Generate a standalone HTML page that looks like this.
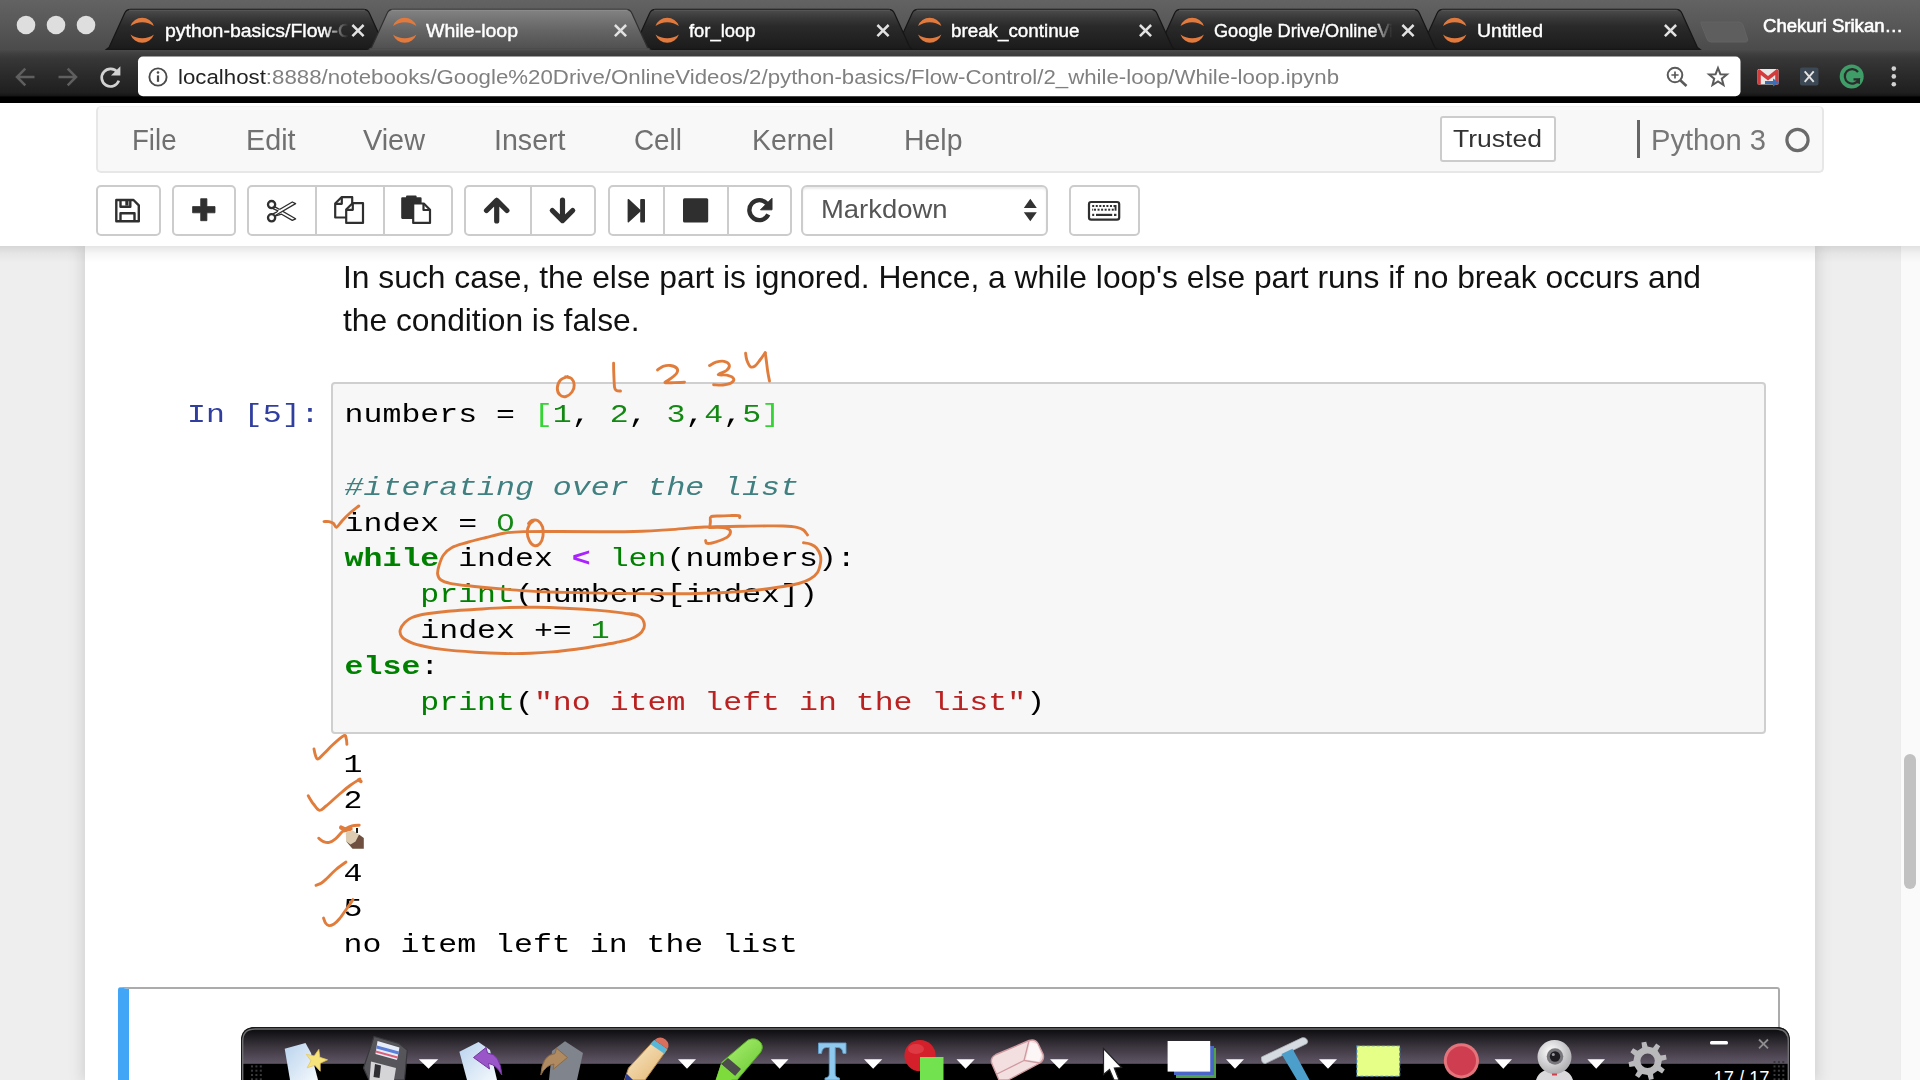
<!DOCTYPE html>
<html>
<head>
<meta charset="utf-8">
<title>While-loop</title>
<style>
*{box-sizing:border-box;margin:0;padding:0}
html,body{width:1920px;height:1080px;overflow:hidden;background:#fff;font-family:"Liberation Sans",sans-serif;}
.abs{position:absolute}
.t{position:absolute;white-space:nowrap;transform-origin:0 50%;}
.tabtxt{color:#fff;font-size:18px;line-height:24px;top:18px;-webkit-text-stroke:0.4px #fff;overflow:hidden}
#urltxt{left:178px;top:64px;font-size:20.5px;line-height:26px;color:#808080;}
#urltxt b{font-weight:normal;color:#222}
#header{position:absolute;left:0;top:103px;width:1920px;height:143px;background:#fff;}
#hshadow{position:absolute;left:0;top:246px;width:1920px;height:17px;background:linear-gradient(rgba(0,0,0,0.10),rgba(0,0,0,0.035) 45%,rgba(0,0,0,0));z-index:5}
#menubar{position:absolute;left:96px;top:106px;width:1728px;height:67px;background:#f8f8f8;border:2px solid #e7e7e7;border-top:1px solid #f0f0f0;border-radius:5px;}
.menu{top:123px;font-size:29px;line-height:34px;color:#707070;}
.btn{position:absolute;top:185px;height:51px;background:#fff;border:2px solid #ccc;border-radius:5px;}
.dv{position:absolute;top:187px;width:2px;height:47px;background:#ccc}
#site{position:absolute;left:0;top:246px;width:1920px;height:834px;background:#eeeeee;overflow:hidden}
#nbc{position:absolute;left:85px;top:0;width:1730px;height:834px;background:#fff;box-shadow:0 0 14px 2px rgba(87,87,87,0.2);}
#sbar{position:absolute;left:1900px;top:246px;width:20px;height:834px;background:#fafafa;border-left:1px solid #ececec}
#thumb{position:absolute;left:1904.3px;top:754px;width:12px;height:134.5px;border-radius:7px;background:#c1c1c1}
.md{left:343px;font-size:30.5px;line-height:43px;color:#111;}
#inbox{position:absolute;left:331px;top:382px;width:1435px;height:352px;background:#f7f7f7;border:2px solid #cfcfcf;border-radius:4px;}
pre{font-family:"Liberation Mono",monospace;font-size:31.55px;line-height:42.857px;color:#000;white-space:pre;transform:scaleY(0.84);transform-origin:0 0}
#prompt{position:absolute;left:187px;top:398.3px;color:#303f9f}
#code{position:absolute;left:344.6px;top:398.3px;}
#out{position:absolute;left:343.6px;top:748.3px;}
.k{color:#008000;font-weight:bold}.n{color:#138813}.c{color:#408080;font-style:italic}.o{color:#aa22ff;font-weight:bold}.b{color:#008000}.s{color:#ba2121}.br{color:#35d435}
#cell2{position:absolute;left:118px;top:987px;width:1662px;height:100px;background:#fff;border:2px solid #ababab;border-left:11px solid #42a5f5;border-radius:3px;}
#ink{position:absolute;left:0;top:0;z-index:20}
#dock{position:absolute;left:0;top:0;z-index:30}
</style>
</head>
<body>
<svg id="chrome" class="abs" style="left:0;top:0" width="1920" height="104" viewBox="0 0 1920 104">
<defs>
<linearGradient id="gF" x1="0" y1="0" x2="0" y2="1"><stop offset="0" stop-color="#636363"/><stop offset="1" stop-color="#4b4b4b"/></linearGradient>
<linearGradient id="gN" x1="0" y1="0" x2="0" y2="1"><stop offset="0" stop-color="#4d4d4d"/><stop offset="0.09" stop-color="#404040"/><stop offset="0.2" stop-color="#373737"/><stop offset="0.55" stop-color="#2a2a2a"/><stop offset="0.9" stop-color="#1f1f1f"/><stop offset="1" stop-color="#101010"/></linearGradient>
<linearGradient id="gI" x1="0" y1="0" x2="0" y2="1"><stop offset="0" stop-color="#4d4d4d"/><stop offset="0.22" stop-color="#383838"/><stop offset="0.42" stop-color="#2a2a2a"/><stop offset="1" stop-color="#1b1b1b"/></linearGradient>
<linearGradient id="gA" x1="0" y1="0" x2="0" y2="1"><stop offset="0" stop-color="#838383"/><stop offset="0.5" stop-color="#666666"/><stop offset="1" stop-color="#505050"/></linearGradient>
</defs>
<rect x="0" y="0" width="1920" height="50" fill="url(#gF)"/>
<rect x="0" y="49" width="1920" height="48.5" fill="url(#gN)"/>
<rect x="0" y="96.5" width="1920" height="7" fill="#000"/>
<rect x="0" y="103" width="1920" height="1" fill="#777" opacity="0.55"/>
<circle cx="26" cy="25" r="9.3" fill="#dedede"/>
<circle cx="56" cy="25" r="9.3" fill="#dedede"/>
<circle cx="86" cy="25" r="9.3" fill="#dedede"/>
<path d="M1419.0,49.3 L1421.5,47.5 L1437.0,13.5 Q1438.8,9.4 1443.0,9.4 L1676.0,9.4 Q1680.2,9.4 1682.0,13.5 L1697.5,47.5 L1700.0,49.3 Z" fill="url(#gI)" stroke="#161616" stroke-width="1.2"/>
<path d="M1441.5,10.2 L1677.5,10.2" stroke="#5a5a5a" stroke-width="1"/>
<path d="M1156.5,49.3 L1159.0,47.5 L1174.5,13.5 Q1176.3,9.4 1180.5,9.4 L1413.5,9.4 Q1417.7,9.4 1419.5,13.5 L1435.0,47.5 L1437.5,49.3 Z" fill="url(#gI)" stroke="#161616" stroke-width="1.2"/>
<path d="M1179.0,10.2 L1415.0,10.2" stroke="#5a5a5a" stroke-width="1"/>
<path d="M894.0,49.3 L896.5,47.5 L912.0,13.5 Q913.8,9.4 918.0,9.4 L1151.0,9.4 Q1155.2,9.4 1157.0,13.5 L1172.5,47.5 L1175.0,49.3 Z" fill="url(#gI)" stroke="#161616" stroke-width="1.2"/>
<path d="M916.5,10.2 L1152.5,10.2" stroke="#5a5a5a" stroke-width="1"/>
<path d="M631.5,49.3 L634.0,47.5 L649.5,13.5 Q651.3,9.4 655.5,9.4 L888.5,9.4 Q892.7,9.4 894.5,13.5 L910.0,47.5 L912.5,49.3 Z" fill="url(#gI)" stroke="#161616" stroke-width="1.2"/>
<path d="M654.0,10.2 L890.0,10.2" stroke="#5a5a5a" stroke-width="1"/>
<path d="M106.5,49.3 L109.0,47.5 L124.5,13.5 Q126.3,9.4 130.5,9.4 L363.5,9.4 Q367.7,9.4 369.5,13.5 L385.0,47.5 L387.5,49.3 Z" fill="url(#gI)" stroke="#161616" stroke-width="1.2"/>
<path d="M129.0,10.2 L365.0,10.2" stroke="#5a5a5a" stroke-width="1"/>
<path d="M369.0,49.3 L371.5,47.5 L387.0,13.5 Q388.8,9.4 393.0,9.4 L626.0,9.4 Q630.2,9.4 632.0,13.5 L647.5,47.5 L650.0,49.3 Z" fill="url(#gA)" stroke="#303030" stroke-width="1.2"/>
<path d="M391.5,10.2 L627.5,10.2" stroke="#909090" stroke-width="1"/>
<rect x="369.5" y="48.3" width="280" height="2" fill="#4f4f4f"/>
<path d="M130.5,26 A12.4,12.4 0 0 1 153.89999999999998,26 A20,20 0 0 0 130.5,26Z" fill="#e27a3d"/>
<path d="M130.5,34.4 A12.4,12.4 0 0 0 153.89999999999998,34.4 A20,20 0 0 1 130.5,34.4Z" fill="#e27a3d"/>
<path d="M352.4,25.0 L363.6,36.2 M363.6,25.0 L352.4,36.2" stroke="#e2e2e2" stroke-width="2.5" stroke-linecap="butt"/>
<path d="M393.0,26 A12.4,12.4 0 0 1 416.4,26 A20,20 0 0 0 393.0,26Z" fill="#e27a3d"/>
<path d="M393.0,34.4 A12.4,12.4 0 0 0 416.4,34.4 A20,20 0 0 1 393.0,34.4Z" fill="#e27a3d"/>
<path d="M614.9,25.0 L626.1,36.2 M626.1,25.0 L614.9,36.2" stroke="#e2e2e2" stroke-width="2.5" stroke-linecap="butt"/>
<path d="M655.5,26 A12.4,12.4 0 0 1 678.9000000000001,26 A20,20 0 0 0 655.5,26Z" fill="#e27a3d"/>
<path d="M655.5,34.4 A12.4,12.4 0 0 0 678.9000000000001,34.4 A20,20 0 0 1 655.5,34.4Z" fill="#e27a3d"/>
<path d="M877.4,25.0 L888.6,36.2 M888.6,25.0 L877.4,36.2" stroke="#e2e2e2" stroke-width="2.5" stroke-linecap="butt"/>
<path d="M918.0,26 A12.4,12.4 0 0 1 941.4000000000001,26 A20,20 0 0 0 918.0,26Z" fill="#e27a3d"/>
<path d="M918.0,34.4 A12.4,12.4 0 0 0 941.4000000000001,34.4 A20,20 0 0 1 918.0,34.4Z" fill="#e27a3d"/>
<path d="M1139.9,25.0 L1151.1,36.2 M1151.1,25.0 L1139.9,36.2" stroke="#e2e2e2" stroke-width="2.5" stroke-linecap="butt"/>
<path d="M1180.5,26 A12.4,12.4 0 0 1 1203.9,26 A20,20 0 0 0 1180.5,26Z" fill="#e27a3d"/>
<path d="M1180.5,34.4 A12.4,12.4 0 0 0 1203.9,34.4 A20,20 0 0 1 1180.5,34.4Z" fill="#e27a3d"/>
<path d="M1402.4,25.0 L1413.6,36.2 M1413.6,25.0 L1402.4,36.2" stroke="#e2e2e2" stroke-width="2.5" stroke-linecap="butt"/>
<path d="M1443.0,26 A12.4,12.4 0 0 1 1466.4,26 A20,20 0 0 0 1443.0,26Z" fill="#e27a3d"/>
<path d="M1443.0,34.4 A12.4,12.4 0 0 0 1466.4,34.4 A20,20 0 0 1 1443.0,34.4Z" fill="#e27a3d"/>
<path d="M1664.9,25.0 L1676.1,36.2 M1676.1,25.0 L1664.9,36.2" stroke="#e2e2e2" stroke-width="2.5" stroke-linecap="butt"/>
<path d="M1701,22 L1739,22 Q1742,22 1743,25 L1747.5,39 Q1748.5,42 1745,42 L1711,42 Q1708,42 1707,39 L1701.5,25 Q1700.5,22 1701,22Z" fill="#5e5e5e" stroke="#636363" stroke-width="1"/>
<rect x="138" y="56.6" width="1602.5" height="39.6" rx="5" fill="#fff"/>
<path d="M34.5,77 L17,77 M25.3,68.7 L17,77 L25.3,85.3" fill="none" stroke="#5f5f5f" stroke-width="2.5"/>
<path d="M58.5,77 L76,77 M67.7,68.7 L76,77 L67.7,85.3" fill="none" stroke="#5f5f5f" stroke-width="2.5"/>
<path d="M117.5,72.3 A8.8,8.8 0 1 0 118.8,80.6" fill="none" stroke="#d2d2d2" stroke-width="2.7"/>
<path d="M120.4,66.2 L120.4,75.6 L111,75.6 Z" fill="#d2d2d2"/>
<circle cx="158" cy="77" r="8.6" fill="none" stroke="#4a4a4a" stroke-width="1.9"/><rect x="156.9" y="75.4" width="2.2" height="6.4" fill="#4a4a4a"/><circle cx="158" cy="72.5" r="1.3" fill="#4a4a4a"/>
<circle cx="1675" cy="75" r="7.3" fill="none" stroke="#5a5a5a" stroke-width="2"/><path d="M1680.3,80.3 L1686.5,86" stroke="#5a5a5a" stroke-width="2.6"/><path d="M1671.4,75 h7.2 M1675,71.4 v7.2" stroke="#5a5a5a" stroke-width="1.7"/>
<polygon points="1718.0,68.0 1720.4,74.2 1726.9,74.5 1721.8,78.6 1723.5,85.0 1718.0,81.4 1712.5,85.0 1714.2,78.6 1709.1,74.5 1715.6,74.2" fill="none" stroke="#5a5a5a" stroke-width="2" stroke-linejoin="miter"/>
<rect x="1757.5" y="69" width="21" height="15.5" rx="1.5" fill="#e8e8e8"/><path d="M1757.5,70.5 L1757.5,84.5 L1760.8,84.5 L1760.8,75 L1768,80.5 L1775.2,75 L1775.2,84.5 L1778.5,84.5 L1778.5,70.5 L1776.8,69 L1768,76 L1759.2,69 Z" fill="#d23c3c"/><path d="M1765,81 h8 v-2.5 l6,4 l-6,4 v-2.5 h-8z" fill="#3a6fb7"/>
<rect x="1800" y="67.5" width="18.5" height="18" rx="2" fill="#3c4954"/><path d="M1804.7,71.3 L1813.7,81.8 M1813.7,71.3 L1804.7,81.8" stroke="#e4e4e4" stroke-width="1.9"/>
<circle cx="1851.7" cy="76.5" r="12" fill="#3f9d68"/><path d="M1858,72 A7.3,7.3 0 1 0 1858.8,79.3 L1853.5,79.3" fill="none" stroke="#2b2b2b" stroke-width="2.2"/><path d="M1855.5,82.8 L1860,78 L1860,84z" fill="#2b2b2b"/>
<circle cx="1893.8" cy="68.6" r="2.3" fill="#d2d2d2"/>
<circle cx="1893.8" cy="76.4" r="2.3" fill="#d2d2d2"/>
<circle cx="1893.8" cy="84.2" r="2.3" fill="#d2d2d2"/>
</svg>
<div class="abs" style="left:165px;top:18.8px;width:185px;height:24px;overflow:hidden;-webkit-mask-image:linear-gradient(90deg,#000 86%,transparent 99%)"><div class="t tabtxt" style="transform:scaleX(1.0808);left:0;top:0;overflow:visible">python-basics/Flow-<span style="position:absolute;left:100%">Control</span></div></div>
<div class="t tabtxt" style="transform:scaleX(1.0818);left:426px;top:18.8px">While-loop</div>
<div class="t tabtxt" style="transform:scaleX(1.0221);left:688.5px;top:18.8px">for_loop</div>
<div class="t tabtxt" style="transform:scaleX(1.0439);left:951px;top:18.8px">break_continue</div>
<div class="abs" style="left:1214px;top:18.8px;width:180px;height:24px;overflow:hidden;-webkit-mask-image:linear-gradient(90deg,#000 88%,transparent 99%)"><div class="t tabtxt" style="transform:scaleX(1.0087);left:0;top:0;overflow:visible">Google Drive/Online<span style="position:absolute;left:100%">Videos</span></div></div>
<div class="t tabtxt" style="transform:scaleX(1.0814);left:1476.5px;top:18.8px">Untitled</div>
<div class="t tabtxt" style="transform:scaleX(1.0291);left:1763px;top:13.8px;-webkit-text-stroke:0.6px #fff">Chekuri Srikan…</div>
<div class="t" id="urltxt" style="transform:scaleX(1.0854);"><b>localhost</b>:8888/notebooks/Google%20Drive/OnlineVideos/2/python-basics/Flow-Control/2_while-loop/While-loop.ipynb</div>

<div id="header"></div>
<div id="menubar"></div>
<div class="t menu" style="transform:scaleX(0.9522);left:131.5px">File</div>
<div class="t menu" style="transform:scaleX(0.9903);left:245.5px">Edit</div>
<div class="t menu" style="transform:scaleX(0.9945);left:362.5px">View</div>
<div class="t menu" style="transform:scaleX(0.9858);left:493.5px">Insert</div>
<div class="t menu" style="transform:scaleX(0.9606);left:633.5px">Cell</div>
<div class="t menu" style="transform:scaleX(0.9782);left:751.5px">Kernel</div>
<div class="t menu" style="transform:scaleX(0.9806);left:903.5px">Help</div>

<div id="site"><div id="nbc"></div></div>
<div id="hshadow"></div>
<div id="sbar"></div><div id="thumb"></div>

<div class="t md" style="transform:scaleX(1.0424);top:256px">In such case, the else part is ignored. Hence, a while loop's else part runs if no break occurs and</div>
<div class="t md" style="transform:scaleX(1.0409);top:299px">the condition is false.</div>

<div id="inbox"></div>
<pre id="prompt">In [5]:</pre>
<pre id="code">numbers = <span class="br">[</span><span class="n">1</span>, <span class="n">2</span>, <span class="n">3</span>,<span class="n">4</span>,<span class="n">5</span><span class="br">]</span>

<span class="c">#iterating over the list</span>
index = <span class="n">0</span>
<span class="k">while</span> index <span class="o">&lt;</span> <span class="b">len</span>(numbers):
    <span class="b">print</span>(numbers[index])
    index += <span class="n">1</span>
<span class="k">else</span>:
    <span class="b">print</span>(<span class="s">"no item left in the list"</span>)</pre>
<div class="abs" id="zdot" style="left:502.4px;top:520px;width:6px;height:5px;background:#f7f7f7"></div>
<div class="abs" style="left:355.5px;top:828px;width:2px;height:5px;background:#1a1a1a"></div>
<pre id="out">1
2

4
5
no item left in the list</pre>

<div id="cell2"></div>

<div class="btn" style="left:96px;width:64.5px"></div>
<div class="btn" style="left:172px;width:63.5px"></div>
<div class="btn" style="left:247px;width:205.5px"></div>
<div class="btn" style="left:464px;width:132px"></div>
<div class="btn" style="left:608px;width:183.5px"></div>
<div class="btn" style="left:1069px;width:71px"></div>
<div class="dv" style="left:314.5px"></div>
<div class="dv" style="left:382.5px"></div>
<div class="dv" style="left:529.5px"></div>
<div class="dv" style="left:662.5px"></div>
<div class="dv" style="left:727px"></div>
<div class="btn" style="left:800.5px;width:247.5px;border-radius:6px;box-shadow:inset 0 2px 2px rgba(0,0,0,0.075)"></div>
<div class="t" style="transform:scaleX(1.0547);left:820.5px;top:193px;font-size:26px;line-height:32px;color:#555">Markdown</div>
<div class="abs" style="left:1439.5px;top:116px;width:116px;height:45.5px;background:#fff;border:2px solid #ccc;border-radius:3px"></div>
<div class="t" style="transform:scaleX(1.0792);left:1453px;top:124.4px;font-size:24.6px;line-height:30px;color:#333">Trusted</div>
<div class="abs" style="left:1636.5px;top:120px;width:3px;height:38px;background:#666"></div>
<div class="t" style="transform:scaleX(1.0045);left:1651px;top:123.2px;font-size:29px;line-height:34px;color:#777">Python 3</div>
<svg class="abs" style="left:0;top:0" width="1920" height="260" viewBox="0 0 1920 260">
<circle cx="1797.5" cy="140" r="10.6" fill="none" stroke="#6a6a6a" stroke-width="3.2"/>
<g fill="none" stroke="#2f2f2f" stroke-width="2.4" stroke-linejoin="round"><path d="M116.3,200 L133.5,200 L138.8,205.3 L138.8,221.3 L116.3,221.3 Z"/><path d="M120.5,221 L120.5,213.3 L134.5,213.3 L134.5,221"/><path d="M120.5,200.3 L120.5,206.8 L130.3,206.8 L130.3,200.3"/></g><rect x="125.3" y="201" width="3.2" height="4.6" fill="#2f2f2f"/>
<path d="M200.7,198.7 h6.2 v7.9 h8.1 v6.2 h-8.1 v7.9 h-6.2 v-7.9 h-8.1 v-6.2 h8.1z" fill="#2f2f2f" stroke="#2f2f2f" stroke-width="0.8" stroke-linejoin="round"/>
<g fill="none" stroke="#2f2f2f" stroke-width="2.3"><circle cx="271.6" cy="204.6" r="3.6"/><circle cx="271.6" cy="217.8" r="3.6"/></g>
<path d="M274.6,206.6 L295.6,218.8 L292.3,220.4 L281.6,214.2 L274.9,216.2 L273.5,213.6 L278.6,211.2 L273.5,208.9Z" fill="#fff" stroke="#2f2f2f" stroke-width="1.3" stroke-linejoin="round"/>
<path d="M274.9,215.8 L295.6,203.6 L292.3,202 L279.5,209.5 " fill="#fff" stroke="#2f2f2f" stroke-width="1.3" stroke-linejoin="round"/>
<g fill="#fff" stroke="#2f2f2f" stroke-width="2.2" stroke-linejoin="round"><path d="M335.2,203.5 L341.5,197.2 L352.2,197.2 L352.2,217.5 L335.2,217.5Z"/><path d="M335.5,203.8 L341.8,203.8 L341.8,197.5" fill="none"/><path d="M346.2,209.5 L352.5,203.2 L363,203.2 L363,222.9 L346.2,222.9Z"/><path d="M346.5,209.8 L352.8,209.8 L352.8,203.5" fill="none"/></g>
<path d="M402.3,198.3 L420.5,198.3 L420.5,203 L413,203 L413,217.8 L402.3,217.8Z" fill="#2f2f2f" stroke="#2f2f2f" stroke-width="2.2" stroke-linejoin="round"/><rect x="406" y="195.6" width="10.6" height="3.6" rx="1" fill="#2f2f2f"/>
<g fill="#fff" stroke="#2f2f2f" stroke-width="2.2" stroke-linejoin="round"><path d="M413.2,203.5 L423.8,203.5 L430,209.7 L430,222.9 L413.2,222.9Z"/><path d="M423.5,203.8 L423.5,210 L429.7,210" fill="none"/></g>
<path d="M496.7,200.39999999999998 L486.5,210.5 M496.7,200.39999999999998 L506.9,210.5 M496.7,201.7 L496.7,220.89999999999998" fill="none" stroke="#2f2f2f" stroke-width="5.2" stroke-linecap="round" stroke-linejoin="round"/>
<path d="M562.5,220.60000000000002 L552.3,210.5 M562.5,220.60000000000002 L572.7,210.5 M562.5,219.3 L562.5,200.10000000000002" fill="none" stroke="#2f2f2f" stroke-width="5.2" stroke-linecap="round" stroke-linejoin="round"/>
<path d="M628.3,199.6 L640.3,210.7 L628.3,221.8Z" fill="#2f2f2f" stroke="#2f2f2f" stroke-width="1.4" stroke-linejoin="round"/><rect x="640.2" y="199" width="4.8" height="23.5" rx="1" fill="#2f2f2f"/>
<rect x="683" y="198.2" width="25.2" height="24.4" rx="1.5" fill="#2f2f2f"/>
<path d="M767,203.6 A10,10 0 1 0 768.3,214.6" fill="none" stroke="#2f2f2f" stroke-width="4.4"/><path d="M772,198.3 L772,209.8 L760.5,209.8 Z" fill="#2f2f2f" stroke="#2f2f2f" stroke-width="1" stroke-linejoin="round"/>
<path d="M1030.3,198.8 L1036.8,208 L1023.8,208Z M1030.3,221.3 L1036.8,212.2 L1023.8,212.2Z" fill="#333"/>
<rect x="1089" y="202" width="30.2" height="17.6" rx="2.2" fill="#fff" stroke="#2f2f2f" stroke-width="2.2"/>
<g fill="#2f2f2f"><rect x="1092.20" y="205" width="2" height="2" /><rect x="1095.75" y="205" width="2" height="2" /><rect x="1099.30" y="205" width="2" height="2" /><rect x="1102.85" y="205" width="2" height="2" /><rect x="1106.40" y="205" width="2" height="2" /><rect x="1109.95" y="205" width="2" height="2" /><rect x="1113.50" y="205" width="2" height="2" /><rect x="1094.00" y="208.7" width="2" height="2" /><rect x="1097.55" y="208.7" width="2" height="2" /><rect x="1101.10" y="208.7" width="2" height="2" /><rect x="1104.65" y="208.7" width="2" height="2" /><rect x="1108.20" y="208.7" width="2" height="2" /><rect x="1111.75" y="208.7" width="2" height="2" /><rect x="1092.2" y="208.7" width="1" height="2"/><rect x="1114.6" y="205" width="1.9" height="5.7"/><rect x="1092.2" y="213.8" width="2" height="2.2"/><rect x="1096" y="213.8" width="16.2" height="2.2"/><rect x="1114" y="213.8" width="2.4" height="2.2"/></g>
</svg>
<svg id="ink" width="1920" height="1080" viewBox="0 0 1920 1080">
<g fill="none" stroke="#e17d3c" stroke-width="2.9" stroke-linecap="round" stroke-linejoin="round">
<path d="M567.5,376.5 C566.3,377.1 562.2,378.1 560.5,380.0 C558.8,381.9 557.4,385.5 557.3,388.0 C557.2,390.5 558.5,393.6 560.0,395.0 C561.5,396.4 564.0,397.0 566.0,396.5 C568.0,396.0 570.6,393.9 572.0,392.0 C573.4,390.1 574.3,387.2 574.2,385.0 C574.1,382.8 573.0,379.9 571.5,378.5 C570.0,377.1 566.5,377.1 565.5,376.8"/>
<path d="M613.6,363.2 C613.6,365.3 613.7,371.9 613.9,376.0 C614.1,380.1 614.2,385.1 614.6,387.5 C615.0,389.9 615.5,389.9 616.5,390.5 C617.5,391.1 619.8,390.9 620.5,391.0"/>
<path d="M657.5,370.0 C658.4,369.4 660.8,367.1 663.0,366.3 C665.2,365.6 668.2,365.1 670.5,365.5 C672.8,365.9 676.0,367.2 677.0,368.5 C678.0,369.8 677.7,371.8 676.5,373.5 C675.3,375.2 671.9,377.5 670.0,379.0 C668.1,380.5 664.3,382.0 665.0,382.6 C665.7,383.2 670.8,382.7 674.0,382.6 C677.2,382.5 682.8,382.3 684.5,382.2"/>
<path d="M709.5,365.6 C710.6,365.0 713.6,362.9 716.0,362.2 C718.4,361.5 721.8,360.8 724.0,361.3 C726.2,361.8 728.9,363.5 729.3,365.0 C729.7,366.5 728.4,368.9 726.5,370.5 C724.6,372.1 718.1,373.8 718.2,374.6 C718.3,375.4 724.4,374.5 727.0,375.2 C729.6,375.9 732.9,377.3 733.6,378.6 C734.3,379.9 732.8,381.9 731.0,383.0 C729.2,384.1 725.9,384.7 723.0,385.0 C720.1,385.3 715.2,384.8 713.6,384.8"/>
<path d="M745.6,353.2 C745.8,354.3 746.0,357.8 746.8,360.0 C747.6,362.2 748.9,365.6 750.3,366.6 C751.7,367.6 753.4,367.1 755.0,366.0 C756.6,364.9 758.3,362.2 760.0,360.0 C761.7,357.8 764.3,354.0 765.2,352.8"/>
<path d="M765.2,352.8 C765.4,354.3 766.1,358.8 766.5,362.0 C766.9,365.2 767.3,368.8 767.8,372.0 C768.3,375.2 769.2,379.5 769.5,381.0"/>
<path d="M324.0,521.6 C324.8,521.6 327.4,521.3 329.0,521.6 C330.6,521.9 332.2,522.5 333.5,523.5 C334.8,524.5 335.1,527.7 336.5,527.3 C337.9,526.9 339.8,523.4 342.0,521.0 C344.2,518.6 347.2,515.5 350.0,513.0 C352.8,510.5 357.3,507.2 358.8,506.0"/>
<path d="M528.5,523.5 C529.1,523.0 530.4,520.8 532.0,520.3 C533.6,519.8 536.2,519.7 538.0,520.8 C539.8,521.9 541.8,524.5 542.6,527.0 C543.4,529.5 543.4,533.2 543.0,536.0 C542.6,538.8 541.4,541.9 540.0,543.5 C538.6,545.1 536.2,546.0 534.5,545.6 C532.8,545.2 530.7,543.3 529.5,541.0 C528.3,538.7 527.2,534.8 527.2,532.0 C527.2,529.2 528.5,526.3 529.5,524.5 C530.5,522.7 532.8,521.6 533.5,521.0"/>
<path d="M807.5,535.0 C806.8,534.2 805.2,531.3 803.5,530.0 C801.8,528.7 800.4,528.0 797.0,527.3 C793.6,526.6 788.0,526.2 783.0,526.0 C778.0,525.8 774.2,525.9 767.0,525.9 C759.8,525.9 750.3,526.1 740.0,526.3 C729.7,526.5 716.7,526.5 705.0,527.0 C693.3,527.5 680.5,528.9 670.0,529.6 C659.5,530.3 653.7,530.9 642.0,531.3 C630.3,531.7 613.7,531.8 600.0,531.8 C586.3,531.8 572.7,531.5 560.0,531.5 C547.3,531.5 533.2,531.4 524.0,531.6 C514.8,531.9 511.3,532.0 505.0,533.0 C498.7,534.0 492.3,535.9 486.0,537.5 C479.7,539.1 472.7,540.8 467.0,542.5 C461.3,544.2 455.9,545.4 452.0,547.5 C448.1,549.6 445.6,552.1 443.5,555.0 C441.4,557.9 440.2,561.8 439.2,565.0 C438.2,568.2 437.3,571.5 437.6,574.0 C437.9,576.5 438.9,578.5 441.0,580.0 C443.1,581.5 445.5,582.3 450.0,583.3 C454.5,584.3 461.8,585.1 468.0,585.8 C474.2,586.5 480.5,587.1 487.5,587.7 C494.5,588.3 502.2,589.0 510.0,589.6 C517.8,590.2 525.2,590.9 534.4,591.4 C543.6,591.9 554.1,592.1 565.0,592.4 C575.9,592.7 587.5,592.9 600.0,593.1 C612.5,593.3 625.1,593.5 640.0,593.6 C654.9,593.7 676.1,593.8 689.4,593.7 C702.7,593.6 709.6,593.3 720.0,592.8 C730.4,592.3 742.2,591.5 751.9,590.6 C761.6,589.7 770.2,588.5 778.0,587.3 C785.8,586.1 793.4,584.9 798.7,583.5 C804.0,582.1 806.9,580.8 810.0,579.0 C813.1,577.2 815.8,575.2 817.5,572.5 C819.2,569.8 820.0,565.9 820.5,563.0 C821.0,560.1 821.0,557.5 820.3,555.0 C819.6,552.5 818.0,549.8 816.5,548.0 C815.0,546.2 813.2,545.2 811.0,544.3 C808.8,543.4 804.8,543.0 803.5,542.8"/>
<path d="M739.6,517.5 C739.5,517.2 740.6,515.9 739.0,515.6 C737.4,515.3 733.2,515.5 730.0,515.6 C726.8,515.7 723.2,515.8 720.0,516.0 C716.8,516.2 712.6,515.8 711.0,516.8 C709.4,517.8 710.6,520.2 710.4,522.0 C710.2,523.8 709.9,526.7 709.8,527.6"/>
<path d="M709.8,527.6 C711.2,527.5 715.3,527.2 718.0,527.3 C720.7,527.4 723.9,527.6 726.0,528.2 C728.1,528.8 730.1,529.6 730.4,531.0 C730.7,532.4 729.7,534.9 728.0,536.5 C726.3,538.1 722.8,539.4 720.0,540.5 C717.2,541.6 713.2,542.8 711.0,543.2 C708.8,543.7 707.5,543.6 706.6,543.2 C705.7,542.8 705.8,541.0 705.6,540.6"/>
<path d="M632.0,613.8 C632.8,614.0 639.0,615.5 637.0,615.3 C635.0,615.1 626.4,613.4 620.0,612.6 C613.6,611.8 607.0,611.1 598.7,610.4 C590.4,609.7 580.5,609.0 570.0,608.5 C559.5,608.0 546.8,607.4 536.0,607.3 C525.2,607.1 515.4,607.2 505.0,607.6 C494.6,608.0 483.2,608.9 473.7,609.5 C464.2,610.1 455.8,610.5 448.0,611.2 C440.2,611.9 433.0,612.8 427.0,613.8 C421.0,614.8 415.7,616.0 412.0,617.5 C408.3,619.0 406.8,620.4 404.8,622.5 C402.8,624.6 400.7,627.6 400.2,630.0 C399.7,632.4 400.2,634.9 402.0,637.0 C403.8,639.1 407.4,641.0 411.2,642.6 C415.0,644.2 419.8,645.4 425.0,646.5 C430.2,647.6 434.2,648.4 442.5,649.4 C450.8,650.4 464.6,651.5 475.0,652.2 C485.4,652.9 495.8,653.3 505.0,653.5 C514.2,653.7 522.2,653.6 530.0,653.3 C537.8,653.0 544.3,652.6 552.0,651.9 C559.7,651.2 568.2,650.2 576.0,649.2 C583.8,648.2 592.0,646.7 598.7,645.6 C605.4,644.5 610.8,643.6 616.0,642.5 C621.2,641.4 626.2,640.5 630.0,639.2 C633.8,637.9 636.7,636.3 639.0,634.5 C641.3,632.7 643.0,630.4 643.8,628.4 C644.6,626.4 644.5,624.3 644.0,622.5 C643.5,620.7 642.5,618.8 641.0,617.5 C639.5,616.2 637.2,615.2 635.0,614.6 C632.8,614.0 629.2,613.8 628.0,613.6"/>
<path d="M314.0,749.0 C314.2,749.9 314.6,752.8 315.2,754.5 C315.8,756.2 316.4,759.2 317.9,759.0 C319.4,758.8 321.5,755.9 324.0,753.5 C326.5,751.1 329.7,747.5 333.0,744.5 C336.3,741.5 341.8,736.5 344.0,735.6 C346.2,734.7 345.8,737.5 346.3,739.0 C346.8,740.5 346.8,743.5 346.9,744.4"/>
<path d="M308.2,795.8 C309.1,797.2 311.6,801.6 313.5,804.0 C315.4,806.4 317.4,810.1 319.5,810.4 C321.6,810.7 322.9,808.5 326.0,806.0 C329.1,803.5 334.0,798.9 338.0,795.5 C342.0,792.1 346.3,788.2 350.0,785.5 C353.7,782.8 358.3,780.1 360.0,779.0"/>
<path d="M318.7,838.2 C319.5,838.8 321.8,840.9 323.5,841.6 C325.2,842.3 327.2,842.9 329.2,842.4 C331.2,841.9 333.4,840.5 335.5,838.8 C337.6,837.1 339.9,834.0 341.7,832.2 C343.5,830.4 344.8,829.2 346.5,828.2 C348.2,827.2 349.9,826.4 352.0,825.9 C354.1,825.4 358.0,825.3 359.2,825.2"/>
<path d="M316.0,885.3 C316.9,884.9 319.7,884.2 321.5,883.0 C323.3,881.8 324.6,880.5 327.0,878.3 C329.4,876.0 332.8,872.2 336.0,869.5 C339.2,866.8 344.3,863.2 346.0,862.0"/>
<path d="M323.5,918.0 C323.8,918.8 324.6,921.7 325.5,923.0 C326.4,924.3 327.6,925.4 329.0,925.6 C330.4,925.8 332.2,925.1 334.0,924.0 C335.8,922.9 337.4,921.3 339.5,918.8 C341.6,916.3 344.2,912.2 346.5,909.0 C348.8,905.8 351.9,901.2 353.0,899.6"/>
<path d="M358.5,780 L361,781.5" stroke-width="3.4"/>
<path d="M341.2,827.6 L345.5,829.8 M344.5,830.2 L350.5,828.6" stroke-width="4.4"/>
</g>
<path d="M345.8,832.5 L352.5,830.3 L359,834.5 L356,842 L350.5,845.5 L346,841.3Z" fill="#dccbb0"/><path d="M359,834.5 L363.8,838 L363.8,848.8 L352.5,848.8 L346,841.3 L350.5,844.5 L355.5,841.5Z" fill="#6f5040"/>
</svg>
<svg id="dock" width="1920" height="1080" viewBox="0 0 1920 1080">
<defs>
<linearGradient id="dg" x1="0" y1="0" x2="0" y2="1"><stop offset="0" stop-color="#0b0b0d"/><stop offset="0.12" stop-color="#121114"/><stop offset="0.5" stop-color="#38333b"/><stop offset="1" stop-color="#615767"/></linearGradient>
<linearGradient id="pg1" x1="0" y1="0" x2="1" y2="1"><stop offset="0" stop-color="#b9d3ee"/><stop offset="1" stop-color="#f4f8fc"/></linearGradient>
<linearGradient id="pen" x1="0" y1="0" x2="1" y2="1"><stop offset="0" stop-color="#fbeed2"/><stop offset="1" stop-color="#e2b36c"/></linearGradient>
<linearGradient id="hl" x1="0" y1="0" x2="1" y2="1"><stop offset="0" stop-color="#b6f57c"/><stop offset="1" stop-color="#63c62c"/></linearGradient>
<radialGradient id="rec" cx="0.5" cy="0.45" r="0.55"><stop offset="0" stop-color="#d2455a"/><stop offset="0.75" stop-color="#cc3a4e"/><stop offset="1" stop-color="#e06a72"/></radialGradient>
<radialGradient id="cam" cx="0.4" cy="0.35" r="0.7"><stop offset="0" stop-color="#ffffff"/><stop offset="1" stop-color="#a9a9ad"/></radialGradient>
<clipPath id="dc"><path d="M241,1080 L241,1041 Q241,1027 255,1027 L1776,1027 Q1790,1027 1790,1041 L1790,1080Z"/></clipPath>
</defs>
<g clip-path="url(#dc)">
<rect x="241" y="1027" width="1549" height="37" fill="url(#dg)"/>
<rect x="241" y="1063.8" width="1549" height="18" fill="#000"/>
<path d="M242.6,1080 L242.6,1041 Q242.6,1029 255,1029 L1776,1029 Q1788.4,1029 1788.4,1041 L1788.4,1080" fill="none" stroke="#6f6f72" stroke-width="1.6"/><path d="M241.4,1080 L241.4,1041 Q241.4,1027.4 255,1027.4 L1776,1027.4 Q1789.6,1027.4 1789.6,1041 L1789.6,1080" fill="none" stroke="#1a1a1a" stroke-width="1.2"/>
<g fill="#3a3a3c"><rect x="251" y="1065.4" width="2" height="2"/><rect x="251" y="1069.7" width="2" height="2"/><rect x="251" y="1074" width="2" height="2"/><rect x="251" y="1078.3" width="2" height="2"/><rect x="255.4" y="1065.4" width="2" height="2"/><rect x="255.4" y="1069.7" width="2" height="2"/><rect x="255.4" y="1074" width="2" height="2"/><rect x="255.4" y="1078.3" width="2" height="2"/><rect x="259.8" y="1065.4" width="2" height="2"/><rect x="259.8" y="1069.7" width="2" height="2"/><rect x="259.8" y="1074" width="2" height="2"/><rect x="259.8" y="1078.3" width="2" height="2"/><rect x="1773.5" y="1061" width="2" height="2"/><rect x="1773.5" y="1065.4" width="2" height="2"/><rect x="1773.5" y="1069.7" width="2" height="2"/><rect x="1773.5" y="1074" width="2" height="2"/><rect x="1773.5" y="1078.3" width="2" height="2"/><rect x="1777.9" y="1061" width="2" height="2"/><rect x="1777.9" y="1065.4" width="2" height="2"/><rect x="1777.9" y="1069.7" width="2" height="2"/><rect x="1777.9" y="1074" width="2" height="2"/><rect x="1777.9" y="1078.3" width="2" height="2"/><rect x="1782.3" y="1061" width="2" height="2"/><rect x="1782.3" y="1065.4" width="2" height="2"/><rect x="1782.3" y="1069.7" width="2" height="2"/><rect x="1782.3" y="1074" width="2" height="2"/><rect x="1782.3" y="1078.3" width="2" height="2"/></g>
<path d="M284.7,1048.7 L305.5,1043 L311,1053 L318,1080 L290,1080Z" fill="url(#pg1)"/>
<polygon points="318.8,1049.4 319.8,1057.3 327.5,1059.8 320.2,1063.2 320.2,1071.2 314.8,1065.3 307.1,1067.8 311.0,1060.8 306.3,1054.4 314.2,1055.9" fill="#f7e37c" stroke="#e9c85a" stroke-width="0.8"/>
<path d="M374,1036.5 L399,1043.5 L407.3,1050 L404.5,1080 L369,1080 L363.5,1068 Z" fill="#55555a" stroke="#38383c" stroke-width="1.2"/><path d="M377.5,1041 L399.5,1047.5 L397,1060 L375.5,1054Z" fill="#e6ecf8"/><path d="M377,1045.5 L399,1051.5 L398.3,1054.5 L376.3,1048.5Z" fill="#5b7fd8"/><path d="M376,1050.5 L397.8,1056.5 L397.4,1058.4 L375.6,1052.4Z" fill="#dc5f78"/><path d="M371,1061.5 L396,1068 L394,1080 L369.5,1080Z" fill="#d5d5d8"/><path d="M375,1064 L381,1065.5 L379.5,1078 L373.5,1077Z" fill="#2f2f33"/>
<path d="M418.8,1059.3 L438.3,1059.3 L428.55,1068.8Z" fill="#fff"/>
<path d="M459.4,1051.7 L478.5,1042 L490,1050 L497,1080 L467,1080Z" fill="url(#pg1)"/>
<path d="M473.5,1057.5 L486,1047.5 L487.5,1053 Q500.5,1054 501.8,1075 Q496,1064.5 488.5,1063.5 L489.5,1069Z" fill="#9a55c8" stroke="#7434a2" stroke-width="1"/>
<path d="M552,1051 L565,1041.3 L583,1053 L577,1080 L549,1080Z" fill="#80858d"/>
<path d="M567.5,1057.5 L556.5,1048.2 L555,1053.5 Q542,1055 540.8,1075 Q546,1065 554,1064 L553,1069.5Z" fill="#b08a60" stroke="#8a6a46" stroke-width="1"/>
<path d="M624.5,1080 L628.5,1068 L654,1040.5 L667,1049.5 L645,1080Z" fill="url(#pen)" stroke="#b98a4c" stroke-width="1"/>
<path d="M650.5,1044.3 L654.5,1040 L667.3,1049 L664,1053.6Z" fill="#56b7d8"/><path d="M654.5,1040 Q660,1035.5 665.5,1039.5 Q670.5,1044 667.3,1049Z" fill="#d9705e"/>
<path d="M624.5,1080 L626.5,1073.5 L633,1080Z" fill="#2c3d8f"/>
<path d="M678,1059.3 L696,1059.3 L687.0,1068.8Z" fill="#fff"/>
<path d="M716,1080 L722,1062 L748,1040 Q756,1036.5 761,1043 Q764,1048 760,1053 L737,1080Z" fill="url(#hl)" stroke="#58b124" stroke-width="1"/>
<path d="M721,1064 L728,1058 L741,1069 L735,1076Z" fill="#4c4c4c"/><path d="M716,1080 L721,1064 L735,1076 L731,1080Z" fill="#7edb3c"/>
<path d="M770.8,1059.3 L788.5,1059.3 L779.65,1068.8Z" fill="#fff"/>
<path d="M818.5,1043 L846,1043 L846,1053.5 L843,1053.5 Q842.5,1047.5 838,1047.5 L835.2,1047.5 L835.2,1074 Q835.2,1077.5 839.5,1078 L839.5,1080 L825,1080 L825,1078 Q829.3,1077.5 829.3,1074 L829.3,1047.5 L826.5,1047.5 Q822,1047.5 821.5,1053.5 L818.5,1053.5Z" fill="#8fcaee" stroke="#5a9fd0" stroke-width="0.9"/>
<path d="M864,1059.3 L882.3,1059.3 L873.15,1068.8Z" fill="#fff"/>
<circle cx="920" cy="1055.6" r="15.6" fill="#d4202a"/><ellipse cx="916" cy="1049" rx="8" ry="5" fill="#e8505a" opacity="0.55"/>
<rect x="920" y="1057" width="23.5" height="23" fill="#72e24e"/>
<path d="M956.5,1059.3 L974.7,1059.3 L965.6,1068.8Z" fill="#fff"/>
<path d="M992,1064 Q989.5,1058 996,1054.5 L1029,1040.5 Q1035,1038.5 1038,1043.5 L1043,1054 Q1045,1060 1039,1063.5 L1008,1080 L999,1080Z" fill="#f3dfe0" stroke="#cf9aa0" stroke-width="1.4"/>
<path d="M1029,1040.5 L1024,1060.5 L1039.5,1063" fill="none" stroke="#cf9aa0" stroke-width="1.3"/><path d="M1024,1060.5 L997,1074" fill="none" stroke="#cf9aa0" stroke-width="1.3"/><path d="M1030,1042 L1037,1044 L1041.5,1055 L1039,1061.5 L1026,1059.5Z" fill="#ffffff" opacity="0.7"/>
<path d="M1050,1059.3 L1068.5,1059.3 L1059.25,1068.8Z" fill="#fff"/>
<path d="M1103.5,1048.5 L1103.5,1074.5 L1109.5,1069.5 L1114,1080 L1119,1080 L1114.3,1068 L1121.5,1067.5Z" fill="#fff" stroke="#222" stroke-width="1.2"/>
<rect x="1176" y="1048" width="40" height="30" fill="#4fa24a"/><rect x="1174" y="1046" width="40" height="29" fill="#4a67c8"/><rect x="1167.6" y="1041" width="42.6" height="30.6" fill="#ffffff"/>
<path d="M1226,1059.3 L1244,1059.3 L1235.0,1068.8Z" fill="#fff"/>
<path d="M1261.5,1057 L1302,1037.8 Q1306.8,1037 1307.6,1041.5 L1307,1043.5 L1265.5,1063.5 Q1261,1063.5 1261.5,1057Z" fill="#d5dbe0" stroke="#aeb6bc" stroke-width="0.8"/>
<path d="M1281.5,1054 L1292.5,1048.8 L1309.5,1080 L1297,1080Z" fill="#4d9fcb"/>
<path d="M1319,1059.3 L1337,1059.3 L1328.0,1068.8Z" fill="#fff"/>
<rect x="1356.8" y="1045.8" width="43" height="30.5" fill="#e6ff86" stroke="#3f7fc0" stroke-width="1.1" stroke-dasharray="3 2"/>
<circle cx="1461.4" cy="1060.8" r="17.6" fill="#e4737c"/><circle cx="1461.4" cy="1060.8" r="14.6" fill="#cf3d50"/>
<path d="M1494.6,1059.3 L1512,1059.3 L1503.3,1068.8Z" fill="#fff"/>
<path d="M1536,1080 Q1539,1069 1554.5,1069 Q1570,1069 1573,1080Z" fill="#d9d9dc"/>
<circle cx="1554.5" cy="1057" r="17" fill="url(#cam)"/><circle cx="1555" cy="1056.5" r="8.3" fill="#77777c"/><circle cx="1555" cy="1056.5" r="5.2" fill="#1d1d22"/><circle cx="1553.3" cy="1054.6" r="1.5" fill="#9a9aa0"/>
<rect x="1552" y="1073.5" width="5" height="2" fill="#d0404a"/>
<path d="M1587.4,1059.3 L1605,1059.3 L1596.2,1068.8Z" fill="#fff"/>
<path d="M1660.7,1055.4 L1665.8,1054.7 L1666.7,1059.4 L1661.8,1060.8 L1660.7,1066.2 L1664.8,1069.4 L1662.1,1073.4 L1657.7,1070.8 L1653.0,1073.9 L1653.7,1079.0 L1649.0,1079.9 L1647.6,1075.0 L1642.2,1073.9 L1639.0,1078.0 L1635.0,1075.3 L1637.6,1070.9 L1634.5,1066.2 L1629.4,1066.9 L1628.5,1062.2 L1633.4,1060.8 L1634.5,1055.4 L1630.4,1052.2 L1633.1,1048.2 L1637.5,1050.8 L1642.2,1047.7 L1641.5,1042.6 L1646.2,1041.7 L1647.6,1046.6 L1653.0,1047.7 L1656.2,1043.6 L1660.2,1046.3 L1657.6,1050.7Z M1654.8,1060.8 A7.2,7.2 0 1 0 1640.3999999999999,1060.8 A7.2,7.2 0 1 0 1654.8,1060.8Z" fill="#b9b9bb" fill-rule="evenodd"/>
<rect x="1710" y="1041" width="18" height="3.6" rx="1.5" fill="#fff"/>
<path d="M1759,1039.5 L1768,1048.3 M1768,1039.5 L1759,1048.3" stroke="#8d8d8d" stroke-width="1.8"/>
<text x="1713.5" y="1085.3" font-family="Liberation Sans, sans-serif" font-size="19.5" fill="#fff" textLength="56" lengthAdjust="spacingAndGlyphs">17 / 17</text>
</g>
</svg>
</body>
</html>
